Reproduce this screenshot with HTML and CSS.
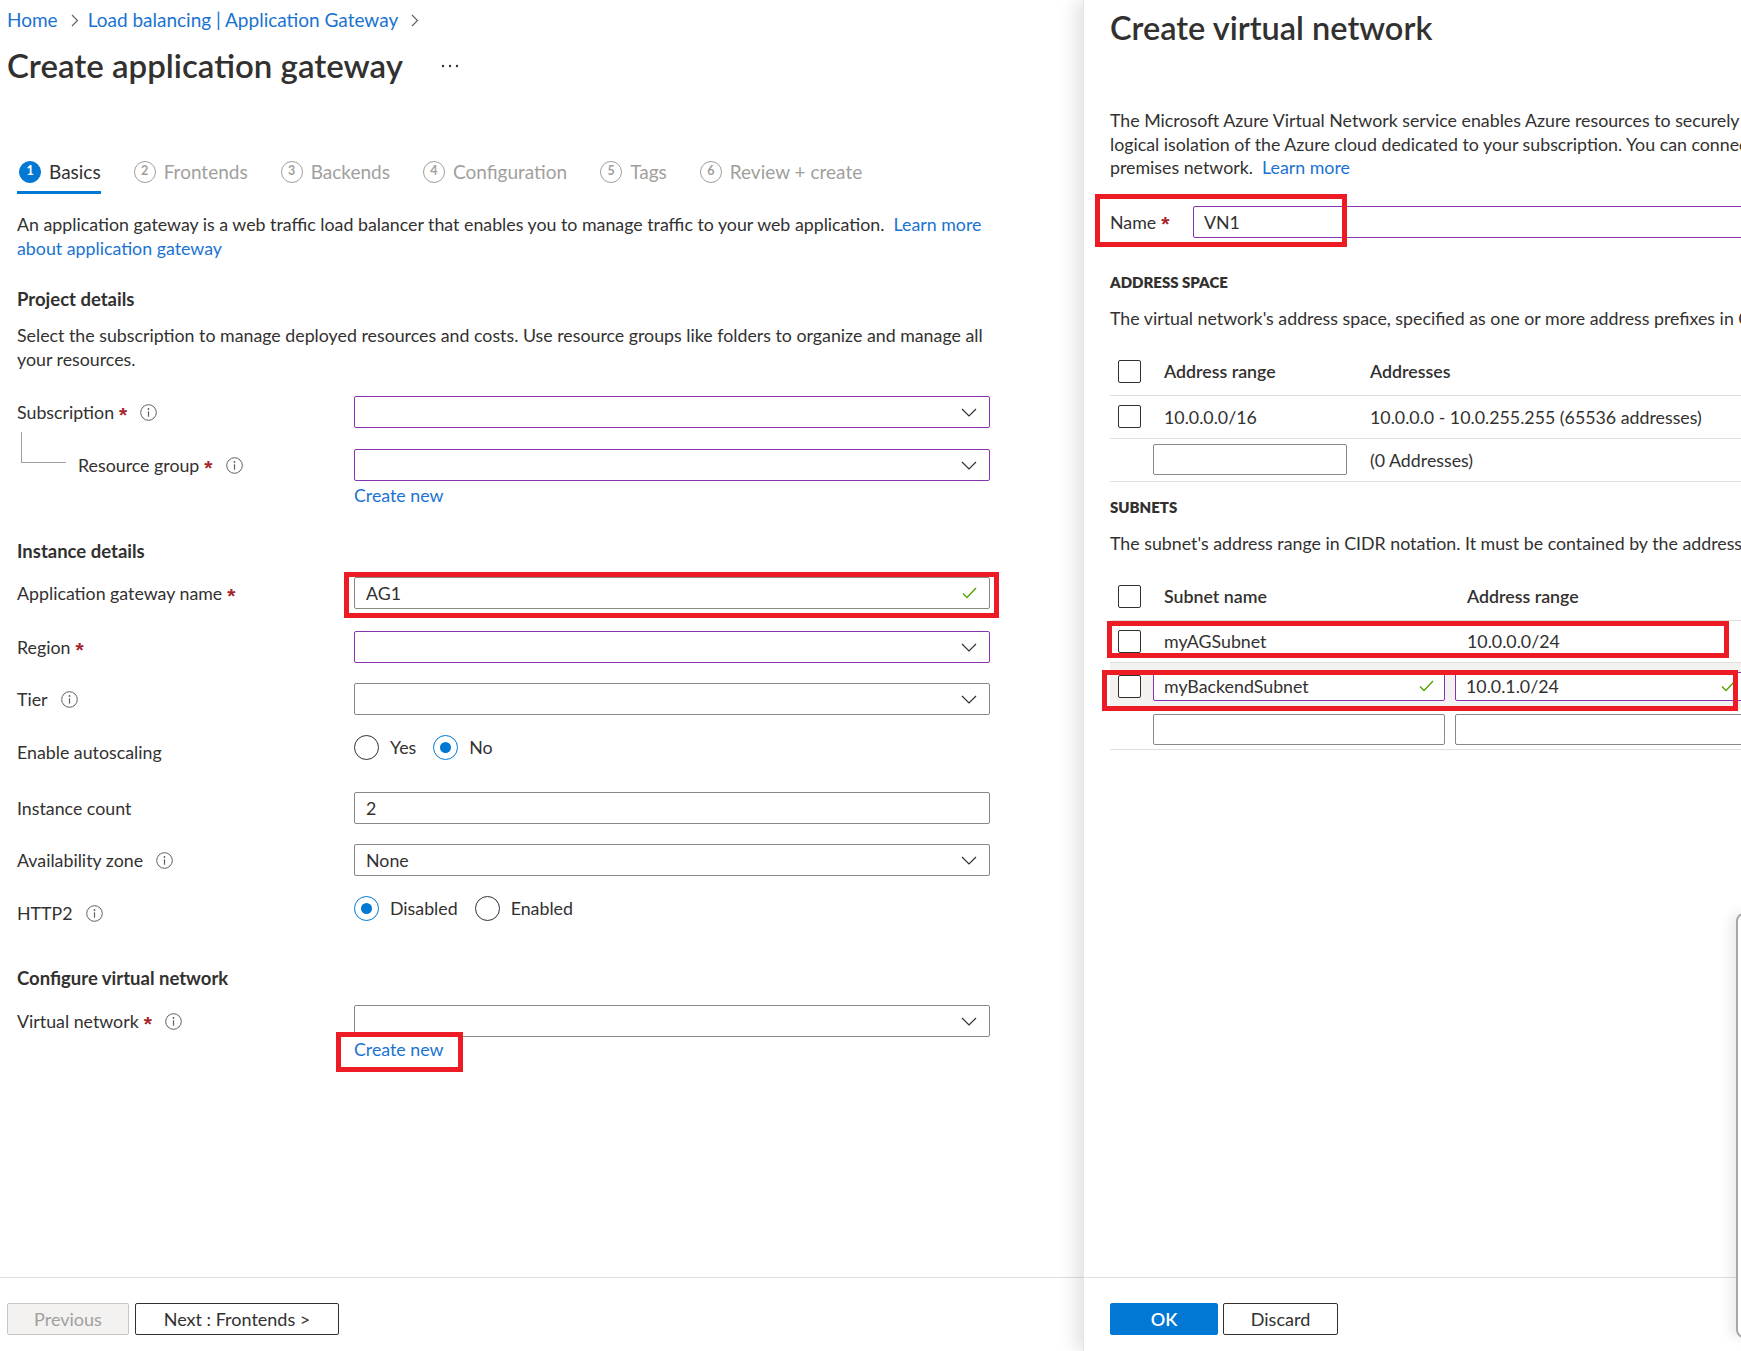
FILE: index.html
```html
<!DOCTYPE html>
<html lang="en">
<head>
<meta charset="utf-8">
<title>Create application gateway</title>
<link rel="stylesheet" href="styles.css">
</head>
<body>
<div class="screen">
  <section class="blade">
    <div class="blade-body">
      <nav class="crumbs">
        <a class="link">Home</a>
        <svg class="crumb-sep" viewBox="0 0 8 13" width="8" height="13"><path d="M1 1l5.5 5.5L1 12" fill="none" stroke="#605e5c" stroke-width="1.1"/></svg>
        <a class="link">Load balancing | Application Gateway</a>
        <svg class="crumb-sep" viewBox="0 0 8 13" width="8" height="13"><path d="M1 1l5.5 5.5L1 12" fill="none" stroke="#605e5c" stroke-width="1.1"/></svg>
      </nav>
      <div class="title-row">
        <h1 class="title">Create application gateway</h1>
        <svg class="more" viewBox="0 0 18 4" width="18" height="4"><circle cx="2" cy="2" r="1.2" fill="#323130"/><circle cx="9" cy="2" r="1.2" fill="#323130"/><circle cx="16" cy="2" r="1.2" fill="#323130"/></svg>
      </div>

      <div class="content">
        <div class="tabs">
          <div class="tab active"><span class="num">1</span><span>Basics</span></div>
          <div class="tab"><span class="num">2</span><span>Frontends</span></div>
          <div class="tab"><span class="num">3</span><span>Backends</span></div>
          <div class="tab"><span class="num">4</span><span>Configuration</span></div>
          <div class="tab"><span class="num">5</span><span>Tags</span></div>
          <div class="tab"><span class="num">6</span><span>Review + create</span></div>
        </div>

        <p class="intro">An application gateway is a web traffic load balancer that enables you to manage traffic to your web application. &nbsp;<a class="link">Learn more</a><br><a class="link">about application gateway</a></p>

        <h2 class="sec">Project details</h2>
        <p class="sec-desc">Select the subscription to manage deployed resources and costs. Use resource groups like folders to organize and manage all<br>your resources.</p>

        <div class="frow r-sub">
          <div class="lbl">Subscription<span class="req">*</span>
            <svg class="info" viewBox="0 0 17 17" width="17" height="17"><circle cx="8.5" cy="8.5" r="7.8" fill="none" stroke="#605e5c" stroke-width="1"/><circle cx="8.5" cy="5" r="0.9" fill="#605e5c"/><path d="M8.5 7.3v5.4" stroke="#605e5c" stroke-width="1.2"/></svg>
          </div>
          <div class="select invalid"><span></span><svg class="chev" viewBox="0 0 16 9" width="16" height="9"><path d="M1 1l7 7 7-7" fill="none" stroke="#323130" stroke-width="1.2"/></svg></div>
        </div>

        <div class="frow r-rg">
          <div class="lbl child">Resource group<span class="req">*</span>
            <svg class="info" viewBox="0 0 17 17" width="17" height="17"><circle cx="8.5" cy="8.5" r="7.8" fill="none" stroke="#605e5c" stroke-width="1"/><circle cx="8.5" cy="5" r="0.9" fill="#605e5c"/><path d="M8.5 7.3v5.4" stroke="#605e5c" stroke-width="1.2"/></svg>
          </div>
          <div class="select invalid"><span></span><svg class="chev" viewBox="0 0 16 9" width="16" height="9"><path d="M1 1l7 7 7-7" fill="none" stroke="#323130" stroke-width="1.2"/></svg></div>
        </div>
        <div class="frow r-link">
          <div></div>
          <div><a class="link">Create new</a></div>
        </div>

        <h2 class="sec s-inst">Instance details</h2>

        <div class="frow r-ag">
          <div class="lbl">Application gateway name<span class="req">*</span></div>
          <div class="ctl">
            <div class="select"><span>AG1</span><svg class="check" viewBox="0 0 15 12" width="15" height="12"><path d="M1 6.5l4 4L14 1" fill="none" stroke="#57a300" stroke-width="1.4"/></svg></div>
            <span class="mark m-ag"></span>
          </div>
        </div>

        <div class="frow r-region">
          <div class="lbl">Region<span class="req">*</span></div>
          <div class="select invalid"><span></span><svg class="chev" viewBox="0 0 16 9" width="16" height="9"><path d="M1 1l7 7 7-7" fill="none" stroke="#323130" stroke-width="1.2"/></svg></div>
        </div>

        <div class="frow r-tier">
          <div class="lbl">Tier
            <svg class="info" viewBox="0 0 17 17" width="17" height="17"><circle cx="8.5" cy="8.5" r="7.8" fill="none" stroke="#605e5c" stroke-width="1"/><circle cx="8.5" cy="5" r="0.9" fill="#605e5c"/><path d="M8.5 7.3v5.4" stroke="#605e5c" stroke-width="1.2"/></svg>
          </div>
          <div class="select"><span></span><svg class="chev" viewBox="0 0 16 9" width="16" height="9"><path d="M1 1l7 7 7-7" fill="none" stroke="#323130" stroke-width="1.2"/></svg></div>
        </div>

        <div class="frow radio-row r-auto">
          <div class="lbl low">Enable autoscaling</div>
          <div class="radios">
            <span class="radio"></span><span class="rtext">Yes</span>
            <span class="radio on"></span><span class="rtext">No</span>
          </div>
        </div>

        <div class="frow r-count">
          <div class="lbl">Instance count</div>
          <div class="select"><span>2</span></div>
        </div>

        <div class="frow r-az">
          <div class="lbl">Availability zone
            <svg class="info" viewBox="0 0 17 17" width="17" height="17"><circle cx="8.5" cy="8.5" r="7.8" fill="none" stroke="#605e5c" stroke-width="1"/><circle cx="8.5" cy="5" r="0.9" fill="#605e5c"/><path d="M8.5 7.3v5.4" stroke="#605e5c" stroke-width="1.2"/></svg>
          </div>
          <div class="select"><span>None</span><svg class="chev" viewBox="0 0 16 9" width="16" height="9"><path d="M1 1l7 7 7-7" fill="none" stroke="#323130" stroke-width="1.2"/></svg></div>
        </div>

        <div class="frow radio-row r-http">
          <div class="lbl low">HTTP2
            <svg class="info" viewBox="0 0 17 17" width="17" height="17"><circle cx="8.5" cy="8.5" r="7.8" fill="none" stroke="#605e5c" stroke-width="1"/><circle cx="8.5" cy="5" r="0.9" fill="#605e5c"/><path d="M8.5 7.3v5.4" stroke="#605e5c" stroke-width="1.2"/></svg>
          </div>
          <div class="radios">
            <span class="radio on"></span><span class="rtext">Disabled</span>
            <span class="radio"></span><span class="rtext">Enabled</span>
          </div>
        </div>

        <h2 class="sec s-vnet">Configure virtual network</h2>

        <div class="frow r-vnet">
          <div class="lbl">Virtual network<span class="req">*</span>
            <svg class="info" viewBox="0 0 17 17" width="17" height="17"><circle cx="8.5" cy="8.5" r="7.8" fill="none" stroke="#605e5c" stroke-width="1"/><circle cx="8.5" cy="5" r="0.9" fill="#605e5c"/><path d="M8.5 7.3v5.4" stroke="#605e5c" stroke-width="1.2"/></svg>
          </div>
          <div class="select"><span></span><svg class="chev" viewBox="0 0 16 9" width="16" height="9"><path d="M1 1l7 7 7-7" fill="none" stroke="#323130" stroke-width="1.2"/></svg></div>
        </div>
        <div class="frow r-link2">
          <div></div>
          <div><span class="ctl inline"><a class="link">Create new</a><span class="mark m-create"></span></span></div>
        </div>
      </div>
    </div>
    <footer class="foot">
      <button class="btn disabled">Previous</button>
      <button class="btn next">Next : Frontends &gt;</button>
    </footer>
  </section>

  <aside class="pane">
    <div class="pane-body">
      <h1 class="pane-title">Create virtual network</h1>
      <p class="pane-desc">The Microsoft Azure Virtual Network service enables Azure resources to securely communicate with each other in a secure,<br>logical isolation of the Azure cloud dedicated to your subscription. You can connect virtual networks to other virtual networks, or your on-<br>premises network. &nbsp;<a class="link">Learn more</a></p>

      <div class="name-row">
        <div class="name-lbl">Name<span class="req">*</span></div>
        <div class="name-input">VN1</div>
        <span class="mark m-name"></span>
      </div>

      <h3 class="caps cap-addr">ADDRESS SPACE</h3>
      <p class="pane-sub">The virtual network's address space, specified as one or more address prefixes in CIDR notation (e.g. 192.168.1.0/24).</p>

      <div class="tbl addr">
        <div class="trow thead">
          <span class="cell c1"><span class="cb"></span></span>
          <span class="cell c2">Address range</span>
          <span class="cell c3">Addresses</span>
        </div>
        <div class="trow">
          <span class="cell c1"><span class="cb"></span></span>
          <span class="cell c2">10.0.0.0/16</span>
          <span class="cell c3">10.0.0.0 - 10.0.255.255 (65536 addresses)</span>
        </div>
        <div class="trow">
          <span class="cell c1"></span>
          <span class="cell c2 nopad"><span class="tinput w-addr"></span></span>
          <span class="cell c3">(0 Addresses)</span>
        </div>
      </div>

      <h3 class="caps cap-sub">SUBNETS</h3>
      <p class="pane-sub">The subnet's address range in CIDR notation. It must be contained by the address space of the virtual network.</p>

      <div class="tbl subnets">
        <div class="trow thead">
          <span class="cell c1"><span class="cb"></span></span>
          <span class="cell c2">Subnet name</span>
          <span class="cell c3">Address range</span>
        </div>
        <div class="trow r-agsub">
          <span class="cell c1"><span class="cb"></span></span>
          <span class="cell c2">myAGSubnet</span>
          <span class="cell c3">10.0.0.0/24</span>
          <span class="mark m-sub1"></span>
        </div>
        <div class="trow r-back">
          <span class="cell c1"><span class="cb"></span></span>
          <span class="cell c2 nopad"><span class="tinput w-name valid"><span>myBackendSubnet</span><svg class="check" viewBox="0 0 15 12" width="15" height="12"><path d="M1 6.5l4 4L14 1" fill="none" stroke="#57a300" stroke-width="1.4"/></svg></span></span>
          <span class="cell c3 nopad"><span class="tinput w-range valid"><span>10.0.1.0/24</span><svg class="check" viewBox="0 0 15 12" width="15" height="12"><path d="M1 6.5l4 4L14 1" fill="none" stroke="#57a300" stroke-width="1.4"/></svg></span></span>
          <span class="mark m-sub2"></span>
        </div>
        <div class="trow r-empty">
          <span class="cell c1"></span>
          <span class="cell c2 nopad"><span class="tinput w-name"></span></span>
          <span class="cell c3 nopad"><span class="tinput w-range"></span></span>
        </div>
      </div>
    </div>
    <footer class="foot pane-foot">
      <button class="btn primary">OK</button>
      <button class="btn discard">Discard</button>
    </footer>
  </aside>

  <div class="edge-window"></div>
</div>
</body>
</html>
```

FILE: styles.css
```css
* { box-sizing: border-box; }

html, body {
  margin: 0;
  padding: 0;
  background: #ffffff;
}

body {
  font-family: Lato, "Open Sans", "Liberation Sans", sans-serif;
  font-size: 17.8px;
  color: #323130;
  line-height: 24px;
}

.screen {
  display: flex;
  width: 1741px;
  height: 1351px;
  overflow: hidden;
  position: relative;
}

.link {
  color: #1a73d1;
  text-decoration: none;
  cursor: pointer;
}

/* ---------- left blade ---------- */
.blade {
  width: 1083px;
  flex: 0 0 1083px;
  display: flex;
  flex-direction: column;
  height: 1351px;
}

.blade-body {
  flex: 1;
}

.crumbs {
  display: flex;
  align-items: center;
  height: 24px;
  margin-top: 8px;
  padding-left: 7px;
  font-size: 19px;
}

.crumb-sep {
  margin: 0 9px 0 13px;
}

.title-row {
  display: flex;
  align-items: center;
  height: 40px;
  margin-top: 13px;
  padding-left: 7px;
}

.title {
  margin: 0;
  font-size: 33px;
  font-weight: 600;
  line-height: 40px;
}

.more {
  margin-left: 38px;
  margin-top: 2px;
}

.content {
  padding-left: 17px;
}

.tabs {
  display: flex;
  gap: 31px;
  margin-top: 67px;
}

.tab {
  display: flex;
  align-items: center;
  gap: 8px;
  height: 42px;
  padding: 0 0 0 2px;
  border-bottom: 3px solid transparent;
  color: #a19f9d;
  font-size: 19px;
}

.tab.active {
  color: #323130;
  border-bottom-color: #0078d4;
}

.num {
  width: 22px;
  height: 22px;
  border-radius: 50%;
  border: 1.3px solid #a19f9d;
  display: flex;
  align-items: center;
  justify-content: center;
  font-size: 12.5px;
  font-weight: 700;
  line-height: 1;
}

.tab.active .num {
  background: #0078d4;
  border-color: #0078d4;
  color: #ffffff;
}

.intro {
  margin: 18px 0 0;
  line-height: 24px;
}

.sec {
  margin: 27px 0 0;
  font-size: 18.5px;
  font-weight: 700;
  line-height: 24px;
}

.sec.s-inst { margin-top: 32px; }
.sec.s-vnet { margin-top: 45px; }

.sec-desc {
  margin: 12px 0 0;
  line-height: 24px;
}

/* form rows */
.frow {
  display: grid;
  grid-template-columns: 337px 636px;
  align-items: center;
  height: 32px;
}

.r-sub { margin-top: 25px; }
.r-rg { margin-top: 21px; }
.r-link { margin-top: 2px; height: 24px; }
.r-ag { margin-top: 14px; }
.r-region { margin-top: 22px; }
.r-tier { margin-top: 20px; }
.r-auto { margin-top: 11px; }
.r-count { margin-top: 32px; }
.r-az { margin-top: 20px; }
.r-http { margin-top: 11px; }
.r-vnet { margin-top: 15px; }
.r-link2 { margin-top: 0; height: 24px; }

.radio-row { height: 34px; }

.lbl {
  display: flex;
  align-items: center;
  height: 32px;
  white-space: nowrap;
}

.lbl.low { margin-top: 10px; }

.lbl.child {
  position: relative;
  padding-left: 61px;
}

.lbl.child::before {
  content: "";
  position: absolute;
  left: 4px;
  top: -17px;
  width: 44px;
  height: 30px;
  border-left: 1px solid #a19f9d;
  border-bottom: 1px solid #a19f9d;
}

.req {
  color: #a4262c;
  margin-left: 5px;
  font-family: "Liberation Sans", sans-serif;
  font-size: 21px;
  font-weight: 700;
  line-height: 1;
  margin-top: 4px;
}

.info {
  margin-left: 13px;
  flex: 0 0 auto;
}

.select {
  height: 32px;
  border: 1px solid #8a8886;
  border-radius: 2px;
  display: flex;
  align-items: center;
  justify-content: space-between;
  padding: 0 12px 0 11px;
  background: #ffffff;
}

.select.invalid {
  border-color: #8a33b0;
}

.chev { flex: 0 0 auto; }
.check { flex: 0 0 auto; }

.ctl {
  position: relative;
}

.ctl.inline {
  display: inline-block;
}

.mark {
  position: absolute;
  border: 5px solid #ed1c24;
  pointer-events: none;
}

.m-ag {
  top: -5px;
  left: -10px;
  right: -9px;
  bottom: -9px;
}

.m-create {
  top: -5px;
  left: -18px;
  right: -19px;
  bottom: -11px;
}

.radios {
  display: flex;
  align-items: center;
}

.radio {
  width: 25px;
  height: 25px;
  border-radius: 50%;
  border: 1px solid #323130;
  display: flex;
  align-items: center;
  justify-content: center;
  flex: 0 0 auto;
}

.radio.on {
  border-color: #0078d4;
}

.radio.on::after {
  content: "";
  width: 11px;
  height: 11px;
  border-radius: 50%;
  background: #0078d4;
}

.rtext {
  margin-left: 11px;
  margin-right: 17px;
}

/* footers */
.foot {
  height: 74px;
  flex: 0 0 74px;
  border-top: 1px solid #e1dfdd;
  padding: 25px 0 0 7px;
  display: flex;
  align-items: flex-start;
  gap: 6px;
}

.btn {
  height: 32px;
  font-family: inherit;
  font-size: 18px;
  border-radius: 2px;
  background: #ffffff;
  border: 1px solid #323130;
  color: #323130;
  padding: 0;
  line-height: 30px;
}

.btn.disabled {
  width: 122px;
  background: #f3f2f1;
  border-color: #c8c6c4;
  color: #a19f9d;
}

.btn.next {
  width: 204px;
}

/* ---------- right pane ---------- */
.pane {
  flex: 1;
  min-width: 0;
  height: 1351px;
  display: flex;
  flex-direction: column;
  overflow: hidden;
  position: relative;
  box-shadow: -6px 0 18px rgba(0, 0, 0, 0.13);
  border-left: 1px solid #e6e6e6;
}

.pane-body {
  flex: 1;
  padding-left: 26px;
  width: 900px;
}

.pane-title {
  margin: 8px 0 0;
  font-size: 32.5px;
  font-weight: 600;
  line-height: 40px;
  white-space: nowrap;
}

.pane-desc {
  margin: 61px 0 0;
  line-height: 23.5px;
  white-space: nowrap;
}

.name-row {
  position: relative;
  display: flex;
  align-items: center;
  height: 32px;
  margin-top: 26px;
}

.name-lbl {
  width: 83px;
  flex: 0 0 83px;
  white-space: nowrap;
  display: flex;
  align-items: center;
}

.name-input {
  flex: 1;
  height: 32px;
  border: 1px solid #8a33b0;
  border-radius: 2px;
  padding-left: 10px;
  line-height: 30px;
}

.m-name {
  left: -15px;
  top: -12px;
  width: 252px;
  height: 53px;
}

.caps {
  margin: 0;
  font-size: 15px;
  font-weight: 800;
  line-height: 20px;
}

.cap-addr { margin-top: 34px; }
.cap-sub { margin-top: 15px; }

.pane-sub {
  margin: 14px 0 0;
  line-height: 24px;
  white-space: nowrap;
}

.tbl {
  margin-top: 18px;
  width: 760px;
}

.trow {
  display: grid;
  align-items: center;
  height: 43px;
  border-bottom: 1px solid #e1dfdd;
  position: relative;
  white-space: nowrap;
}

.trow.thead {
  height: 48px;
  font-weight: 600;
}

.tbl.addr .trow { grid-template-columns: 43px 217px 1fr; }
.tbl.subnets .trow { grid-template-columns: 43px 302px 1fr; }

.cell.c1 { padding-left: 8px; display: flex; align-items: center; }
.cell.c2 { padding-left: 11px; }
.tbl.subnets .cell.c3 { padding-left: 12px; }
.cell.nopad { padding-left: 0 !important; display: flex; align-items: center; }

.cb {
  width: 23px;
  height: 23px;
  border: 1px solid #323130;
  border-radius: 2px;
  display: block;
  background: #ffffff;
}

.tinput {
  display: flex;
  align-items: center;
  justify-content: space-between;
  height: 31px;
  border: 1px solid #8a8886;
  border-radius: 2px;
  padding: 0 10px;
  background: #ffffff;
}

.tinput.valid {
  border-color: #8a33b0;
  height: 29px;
}

.w-addr { width: 194px; }
.w-name { width: 292px; }
.w-range { width: 300px; padding-right: 18px; }

.tbl.subnets .r-agsub { height: 42px; }
.tbl.subnets .r-back {
  height: 47px;
  background: #f3f2f1;
  border-bottom: none;
}
.tbl.subnets .r-empty { height: 40px; }

.m-sub1 {
  left: -3px;
  top: 0;
  width: 622px;
  height: 37px;
}

.m-sub2 {
  left: -8px;
  top: 7px;
  width: 636px;
  height: 41px;
}

.pane-foot {
  padding-left: 26px;
  gap: 5px;
}

.btn.primary {
  width: 108px;
  background: #0078d4;
  border-color: #0078d4;
  color: #ffffff;
  font-weight: 600;
}

.btn.discard {
  width: 115px;
}

/* neighbouring window peeking at the right edge */
.edge-window {
  position: absolute;
  left: 1736px;
  top: 913px;
  width: 20px;
  height: 425px;
  border: 2px solid #a8a8a8;
  border-radius: 8px;
  background: #ffffff;
  box-shadow: -6px 0 12px rgba(0, 0, 0, 0.08);
}
```
